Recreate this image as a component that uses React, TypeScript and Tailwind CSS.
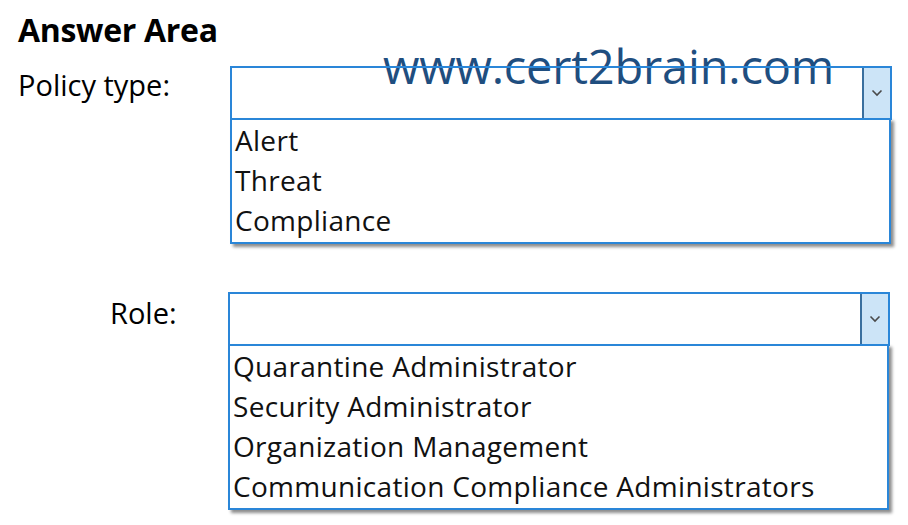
import React from "react";

type Props = { options: string[] };

function Chevron() {
  return (
    <svg width="12" height="8" viewBox="0 0 12 8" fill="none">
      <path d="M1.5 1.5 L6 6 L10.5 1.5" stroke="#4a4a4a" strokeWidth="1.6" />
    </svg>
  );
}

function DropDown({ options }: Props) {
  return (
    <div className="w-[662px] shrink-0">
      {/* closed select - transparent so the watermark shows through under the border */}
      <div className="relative z-10 flex h-[54px] border-2 border-[#2a86d8]">
        <div className="flex-1" />
        <div className="flex w-[28px] items-center justify-center border-l-2 border-[#3a6f9e] bg-[#cce4f7]">
          <Chevron />
        </div>
      </div>
      {/* open list */}
      <div className="-mt-[2px] w-[661px] border-2 border-t-0 border-[#2a86d8] bg-white pl-[3px] pt-[2px] pb-[2px] shadow-[3px_3px_3px_rgba(0,0,0,0.45)]">
        {options.map((o) => (
          <div key={o} className="h-[40px] whitespace-nowrap leading-[40px] text-[28px] tracking-[0.3px] text-[#111]">
            {o}
          </div>
        ))}
      </div>
    </div>
  );
}

export default function App() {
  return (
    <div className="relative h-[525px] w-[908px] overflow-hidden bg-white font-['Open_Sans',sans-serif] text-black">
      <div className="pl-[18px] pt-[12px] text-[32px] font-bold leading-[36px] tracking-[-0.3px]">Answer Area</div>

      <div className="mt-[18px] flex">
        <div className="w-[230px] shrink-0 pl-[18px] pt-[2px] text-[29px] leading-[34px]">Policy type:</div>
        <DropDown options={["Alert", "Threat", "Compliance"]} />
      </div>

      <div className="mt-[48px] flex">
        <div className="w-[228px] shrink-0 pl-[110px] pt-[4px] text-[29px] leading-[34px]">Role:</div>
        <DropDown
          options={[
            "Quarantine Administrator",
            "Security Administrator",
            "Organization Management",
            "Communication Compliance Administrators",
          ]}
        />
      </div>

      {/* watermark */}
      <div className="absolute left-[383px] top-[38px] whitespace-nowrap text-[47px] leading-[56px] tracking-[-0.2px] text-[#1f4e7f]">
        www.cert2brain.com
      </div>
    </div>
  );
}
